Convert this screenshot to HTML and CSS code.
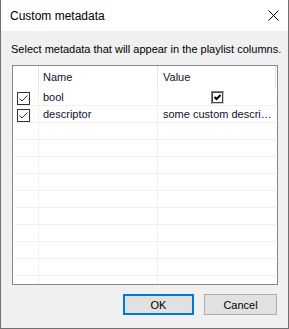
FILE: index.html
```html
<html lang="en">
<head>
    <title>Custom metadata</title>
    <meta http-equiv="Content-Type" content="text/html; charset=utf-8">
    <link rel="stylesheet" href="styles.css">
</head>
<body>
<div class="window">
    <div class="titlebar">
        <span class="title">Custom metadata</span>
        <svg class="close" width="11" height="11" viewBox="0 0 11 11">
            <path d="M0.5 0.5 L10.5 10.5 M10.5 0.5 L0.5 10.5" stroke="#000" stroke-width="1" fill="none"/>
        </svg>
    </div>
    <div class="content">
        <div class="label">Select metadata that will appear in the playlist columns.</div>
        <div class="listbox">
            <div class="header">
                <div class="hcell c1"></div>
                <div class="hcell c2">Name</div>
                <div class="hcell c3">Value</div>
            </div>
            <div class="row">
                <div class="cell c1">
                    <svg class="check" width="13" height="13" viewBox="0 0 13 13">
                        <rect x="0.5" y="0.5" width="12" height="12" fill="#fff" stroke="#333"/>
                        <path d="M2.5 6.5 L5 9 L10.5 3.5" stroke="#333" stroke-width="1" fill="none"/>
                    </svg>
                </div>
                <div class="cell c2">bool</div>
                <div class="cell c3 centered">
                    <svg width="13" height="13" viewBox="0 0 13 13">
                        <rect x="0" y="0" width="13" height="13" fill="#808080"/>
                        <rect x="1" y="1" width="12" height="12" fill="#d4d0c8"/>
                        <rect x="1.5" y="1.5" width="10" height="10" fill="#fff" stroke="#404040"/>
                        <path d="M3.5 6 L5.5 8 L9.5 4" stroke="#000" stroke-width="2" fill="none"/>
                    </svg>
                </div>
            </div>
            <div class="row">
                <div class="cell c1">
                    <svg class="check" width="13" height="13" viewBox="0 0 13 13">
                        <rect x="0.5" y="0.5" width="12" height="12" fill="#fff" stroke="#333"/>
                        <path d="M2.5 6.5 L5 9 L10.5 3.5" stroke="#333" stroke-width="1" fill="none"/>
                    </svg>
                </div>
                <div class="cell c2">descriptor</div>
                <div class="cell c3">some custom descri…</div>
            </div>
            <div class="row"><div class="cell c1"></div><div class="cell c2"></div><div class="cell c3"></div></div>
            <div class="row"><div class="cell c1"></div><div class="cell c2"></div><div class="cell c3"></div></div>
            <div class="row"><div class="cell c1"></div><div class="cell c2"></div><div class="cell c3"></div></div>
            <div class="row"><div class="cell c1"></div><div class="cell c2"></div><div class="cell c3"></div></div>
            <div class="row"><div class="cell c1"></div><div class="cell c2"></div><div class="cell c3"></div></div>
            <div class="row"><div class="cell c1"></div><div class="cell c2"></div><div class="cell c3"></div></div>
            <div class="row"><div class="cell c1"></div><div class="cell c2"></div><div class="cell c3"></div></div>
            <div class="row"><div class="cell c1"></div><div class="cell c2"></div><div class="cell c3"></div></div>
            <div class="row"><div class="cell c1"></div><div class="cell c2"></div><div class="cell c3"></div></div>
            <div class="row"><div class="cell c1"></div><div class="cell c2"></div><div class="cell c3"></div></div>
        </div>
        <div class="buttons">
            <div class="btn default">OK</div>
            <div class="btn cancel">Cancel</div>
        </div>
    </div>
</div>
</body>
</html>
```

FILE: styles.css
```css
body{
    margin: 0;
    font-family: "Liberation Sans", Arial, sans-serif;
    font-size: 11px;
    color: #000;
}
.window{
    width: 289px;
    height: 329px;
    box-sizing: border-box;
    border: 1px solid #707070;
    border-top: none;
    display: flex;
    flex-direction: column;
    background-color: #f0f0f0;
}
.titlebar{
    height: 31px;
    background-color: #fff;
    display: flex;
    align-items: center;
    padding-left: 9px;
    padding-right: 9px;
}
.title{
    flex: 1;
    font-size: 12px;
}
.close{
    display: block;
    margin-top: -1px;
}
.content{
    flex: 1;
    padding: 10px 10px 0 10px;
}
.label{
    height: 16px;
    line-height: 16px;
    white-space: nowrap;
}
.listbox{
    margin-top: 8px;
    margin-left: 1px;
    width: 266px;
    height: 220px;
    box-sizing: border-box;
    border: 1px solid #828790;
    background-color: #fff;
    padding: 0 1px 1px 1px;
    overflow: hidden;
    color: #10102e;
}
.header{
    display: flex;
    height: 23px;
}
.hcell{
    box-sizing: border-box;
    border-right: 1px solid #e5e5e5;
    line-height: 22px;
    padding-left: 4px;
}
.row{
    display: flex;
    height: 17px;
    box-sizing: border-box;
    border-bottom: 1px solid #f0f0f0;
}
.cell{
    box-sizing: border-box;
    border-right: 1px solid #f0f0f0;
    line-height: 16px;
    padding-left: 4px;
    white-space: nowrap;
    overflow: hidden;
}
.c1{
    width: 25px;
    padding-left: 3px;
}
.c2{
    width: 119px;
}
.c3{
    width: 118px;
    padding-left: 5px;
}
.cell.c3{
    border-right: none;
}
.centered{
    display: flex;
    justify-content: center;
    align-items: center;
    padding-left: 0;
}
.check{
    display: block;
    margin-top: 3px;
}
.buttons{
    display: flex;
    justify-content: flex-end;
    gap: 10px;
    margin-top: 9px;
    padding-right: 1px;
}
.btn{
    height: 21px;
    box-sizing: border-box;
    background-color: #e1e1e1;
    border: 1px solid #adadad;
    display: flex;
    align-items: center;
    justify-content: center;
}
.default{
    width: 71px;
    border: 2px solid #0078d7;
}
.cancel{
    width: 73px;
}
```
